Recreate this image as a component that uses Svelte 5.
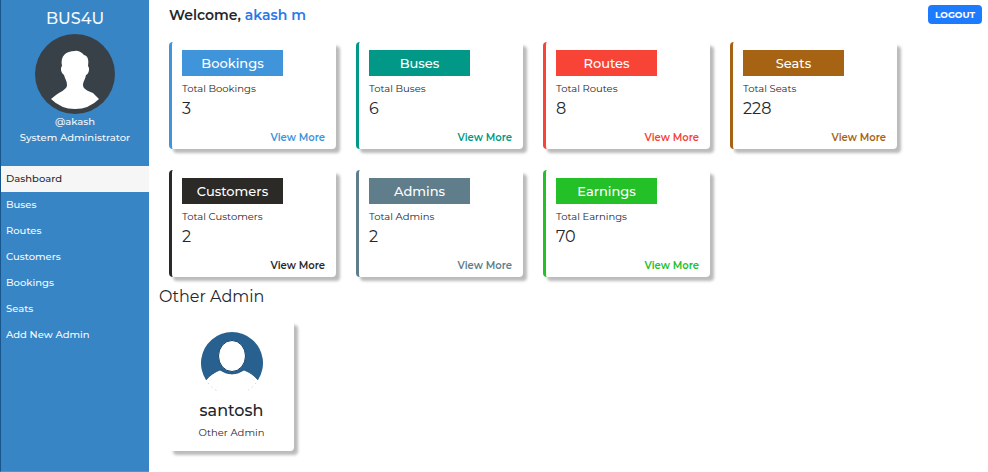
<script>
  const nav = ['Dashboard', 'Buses', 'Routes', 'Customers', 'Bookings', 'Seats', 'Add New Admin'];
  const cards = [
    { name: 'Bookings', total: 3, color: '#4094da' },
    { name: 'Buses', total: 6, color: '#019888' },
    { name: 'Routes', total: 8, color: '#f84337' },
    { name: 'Seats', total: 228, color: '#a56313' },
    { name: 'Customers', total: 2, color: '#2b2a27' },
    { name: 'Admins', total: 2, color: '#607d8b' },
    { name: 'Earnings', total: 70, color: '#24c027' }
  ];
</script>

<div class="layout">
  <aside>
    <div class="profile">
      <h1>BUS4U</h1>
      <svg class="avatar" viewBox="0 0 80 80" aria-hidden="true">
        <circle cx="40" cy="40" r="40" fill="#384048" />
        <path
          d="M40 17C44 16 47 19 49 21C53 22 54 26 53 32C55 34 54 40 51 41C50 46 48 48 48 51C48 55 53 57 58 59L64 65Q54 75 40 75Q26 75 16 65L21 61C27 57 32 55 32 51C32 47 30 45 29 41C26 39 25 34 27 32C25 22 31 17 40 17Z"
          fill="#fff"
        />
      </svg>
      <p>@akash</p>
      <p>System Administrator</p>
    </div>
    <nav>
      {#each nav as item, i}
        <a href="#{item}" class:active={i === 0}>{item}</a>
      {/each}
    </nav>
  </aside>

  <main>
    <header>
      <h2>Welcome, <span>akash m</span></h2>
      <button type="button">LOGOUT</button>
    </header>

    <section class="cards">
      {#each cards as card}
        <article class="card" style="--accent: {card.color}">
          <h3>{card.name}</h3>
          <p class="label">Total {card.name}</p>
          <p class="total">{card.total}</p>
          <a href="#{card.name}">View More</a>
        </article>
      {/each}
    </section>

    <section>
      <h4>Other Admin</h4>
      <article class="admin">
        <svg viewBox="0 0 62 62" aria-hidden="true">
          <path
            d="M5 48A31 31 0 1 1 57 48C53 43 48 40 43 38Q37 42 31 42Q25 42 19 38C14 40 9 43 5 48Z"
            fill="#28618f"
          />
          <ellipse cx="31" cy="24" rx="13.5" ry="15.5" fill="#fff" stroke="#17436b" />
          <path d="M5 48C9 43 14 40 19 38Q25 42 31 42Q37 42 43 38C48 40 53 43 57 48" fill="none" stroke="#17436b" stroke-width=".7" />
          <path d="M7 51Q12 57 17 59M55 51Q51 56 47 58" fill="none" stroke="#999" stroke-width=".6" stroke-dasharray="1 4" />
        </svg>
        <h5>santosh</h5>
        <p>Other Admin</p>
      </article>
    </section>
  </main>
</div>

<style>
  :global(body) {
    margin: 0;
    background: #fff;
  }
  .layout {
    display: flex;
    min-height: 100vh;
    font-family: Montserrat, Inter, sans-serif;
    font-size: 10px;
    line-height: 16px;
    color: #24272b;
  }
  h1, h2, h3, h4, h5, p {
    margin: 0;
    font-weight: 500;
  }
  a {
    text-decoration: none;
  }
  aside {
    box-sizing: border-box;
    width: 149px;
    flex: none;
    background: #3885c5;
    border-left: 1px solid #17558d;
    border-bottom: 1px solid #6c8da9;
    color: #f5f9fd;
  }
  .profile {
    display: flex;
    flex-direction: column;
    align-items: center;
    height: 158px;
    padding-top: 8px;
  }
  .profile p {
    font-weight: 500;
  }
  h1 {
    font-size: 16px;
    line-height: 22px;
    margin-bottom: 4px;
  }
  .avatar {
    width: 80px;
    height: 80px;
    flex: none;
  }
  nav a {
    display: block;
    padding: 5px;
    color: #f5f9fd;
    font-weight: 500;
  }
  nav a.active {
    background: #f6f6f6;
    color: #2b2b2b;
  }
  main {
    flex: 1;
    min-width: 0;
    padding: 5px 6px 16px 20px;
  }
  header {
    display: flex;
    justify-content: space-between;
    align-items: flex-start;
    margin-bottom: 17px;
  }
  h2 {
    font-size: 14px;
    line-height: 20px;
    font-weight: 600;
  }
  h2 span {
    color: #2b78e8;
  }
  button {
    border: 0;
    border-radius: 4px;
    padding: 0 7px;
    height: 19px;
    background: #1d7bff;
    color: #fff;
    font-family: inherit;
    font-size: 9px;
    font-weight: 700;
  }
  .cards {
    display: grid;
    grid-template-columns: repeat(auto-fill, 167px);
    gap: 21px 20px;
  }
  .card, .admin {
    box-sizing: border-box;
    display: flex;
    flex-direction: column;
    background: #fff;
    border-radius: 4px;
    box-shadow: 4px 4px 3px #bbb;
  }
  .card {
    padding: 8px 11px 3px 10px;
    border-left: 3px solid var(--accent);
  }
  .card h3 {
    width: 101px;
    background: var(--accent);
    color: #fff;
    font-size: 13px;
    line-height: 26px;
    text-align: center;
  }
  .label {
    margin-top: 5px;
    font-weight: 400;
  }
  .total {
    margin-top: 1px;
    font-size: 16px;
    line-height: 22px;
    font-weight: 400;
  }
  .card a {
    align-self: flex-end;
    margin-top: 10px;
    color: var(--accent);
    font-weight: 600;
  }
  h4 {
    margin: 9px 0 0 -10px;
    font-size: 16px;
    line-height: 22px;
    font-weight: 400;
  }
  .admin {
    width: 125px;
    align-items: center;
    margin-top: 13px;
    padding: 11px 0 10px;
  }
  .admin svg {
    width: 62px;
    height: 62px;
  }
  h5 {
    margin: 6px 0 3px;
    font-size: 16px;
    line-height: 22px;
  }
  .admin p {
    font-weight: 400;
  }
</style>
